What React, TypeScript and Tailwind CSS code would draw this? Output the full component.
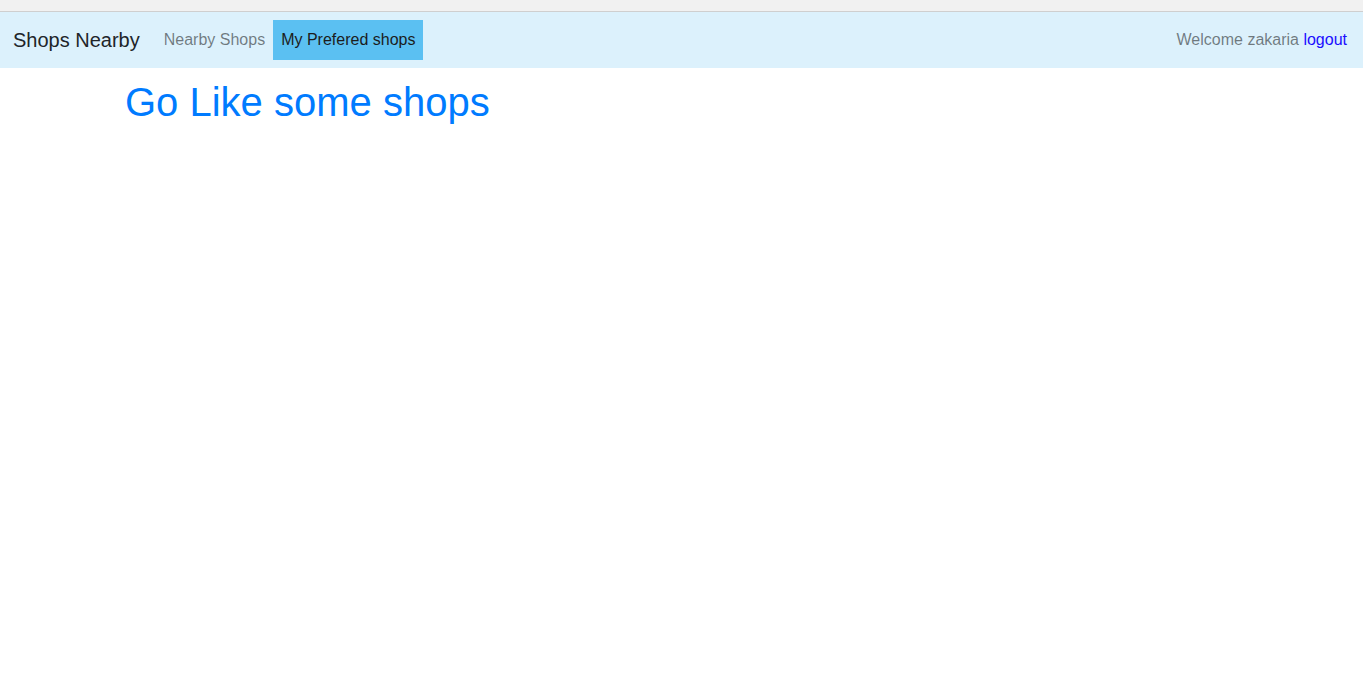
export default function App() {
  return (
    <div className="min-h-screen bg-white font-['Liberation_Sans',Arial,sans-serif]">
      {/* browser chrome remnant */}
      <div className="h-[12px] bg-[#f1f1f1] border-b border-[#cfcfcf]" />

      <nav className="flex items-center h-[56px] pl-[13px] pr-3 bg-[#dcf1fc]">
        <a className="text-[20px] leading-[30px] text-[#212529] mr-4">Shops Nearby</a>
        <ul className="flex items-center">
          <li>
            <a className="block px-2 py-2 text-[16px] leading-6 text-[rgba(0,0,0,0.5)]">Nearby Shops</a>
          </li>
          <li>
            <a className="block px-2 py-2 text-[16px] leading-6 text-[#1c1c1c] bg-[#5bc0f2]">My Prefered shops</a>
          </li>
        </ul>
        <div className="ml-auto pr-1 text-[16px] leading-6 text-[rgba(0,0,0,0.5)]">
          Welcome zakaria <a className="text-[#1a0dff]">logout</a>
        </div>
      </nav>

      <main className="pl-[125px] pt-[10px]">
        <h1 className="text-[40px] leading-[48px] text-[#007bff]">Go Like some shops</h1>
      </main>
    </div>
  )
}
